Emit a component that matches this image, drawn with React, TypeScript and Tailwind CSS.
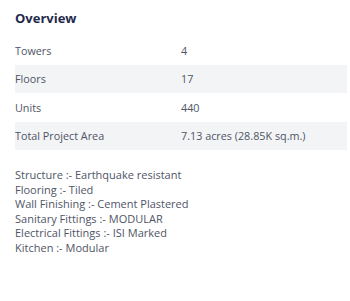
const rows = [
  { label: "Towers", value: "4" },
  { label: "Floors", value: "17" },
  { label: "Units", value: "440" },
  { label: "Total Project Area", value: "7.13 acres (28.85K sq.m.)" },
];

const specs = [
  "Structure :- Earthquake resistant",
  "Flooring :- Tiled",
  "Wall Finishing :- Cement Plastered",
  "Sanitary Fittings :- MODULAR",
  "Electrical Fittings :- ISI Marked",
  "Kitchen :- Modular",
];

export default function App() {
  return (
    <div
      className="h-[301px] w-[350px] bg-white pl-[15px] pr-[3px] pt-[9px]"
      style={{ fontFamily: '"Open Sans", sans-serif' }}
    >
      <h2 className="text-[13px] font-bold leading-[18px] text-[#1f2a4d]">Overview</h2>
      <div className="mt-[9px]">
        {rows.map((r, i) => (
          <div
            key={r.label}
            className={`grid h-[28.5px] grid-cols-2 items-center pt-px text-[10.8px] text-[#4f5566] ${
              i % 2 === 1 ? "bg-[#f3f4f6]" : ""
            }`}
          >
            <span>{r.label}</span>
            <span>{r.value}</span>
          </div>
        ))}
      </div>
      <div className="mt-[18px] text-[11px] leading-[14.5px] text-[#4f5566]">
        {specs.map((s) => (
          <p key={s}>{s}</p>
        ))}
      </div>
    </div>
  );
}
